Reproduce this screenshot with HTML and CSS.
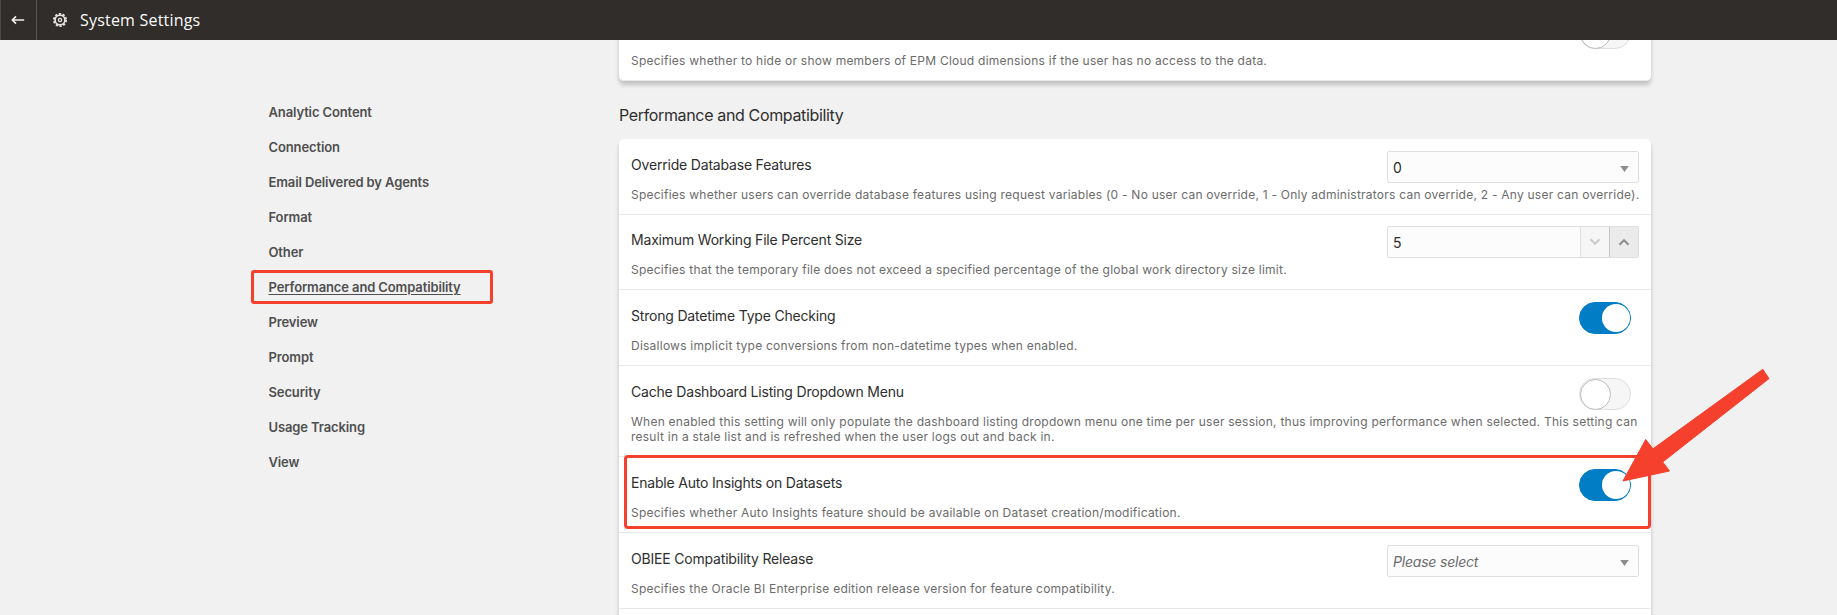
FILE: index.html
```html
<!DOCTYPE html>
<html lang="en">
<head>
<meta charset="utf-8">
<title>System Settings</title>
<link rel="stylesheet" href="styles.css">
</head>
<body>
<header class="topbar">
  <button class="back" aria-label="Back">
    <svg width="14" height="10" viewBox="0 0 14 10"><path d="M1.6 5H13.2M5 1.4 1.4 5 5 8.6" fill="none" stroke="#efeeed" stroke-width="1.7"/></svg>
  </button>
  <svg class="gear" width="16" height="16" viewBox="0 0 16 16">
    <circle cx="8" cy="8" r="6.1" fill="none" stroke="#e4e3e2" stroke-width="1.9" stroke-dasharray="2.2 1.63"/>
    <circle cx="8" cy="8" r="4.9" fill="none" stroke="#e4e3e2" stroke-width="1.7"/>
    <circle cx="8" cy="8" r="1.6" fill="none" stroke="#e4e3e2" stroke-width="1.3"/>
  </svg>
  <h1 class="page-title">System Settings</h1>
</header>
<div class="layout">
  <nav class="sidebar">
    <a class="nav-item">Analytic Content</a>
    <a class="nav-item">Connection</a>
    <a class="nav-item">Email Delivered by Agents</a>
    <a class="nav-item">Format</a>
    <a class="nav-item">Other</a>
    <a class="nav-item active">Performance and Compatibility</a>
    <a class="nav-item">Preview</a>
    <a class="nav-item">Prompt</a>
    <a class="nav-item">Security</a>
    <a class="nav-item">Usage Tracking</a>
    <a class="nav-item">View</a>
  </nav>
  <main class="content">
    <section class="card card-previous">
      <div class="row">
        <div class="row-head"><span class="label"></span><span class="toggle"><i class="knob"></i></span></div>
        <p class="desc">Specifies whether to hide or show members of EPM Cloud dimensions if the user has no access to the data.</p>
      </div>
    </section>
    <h2 class="section-title">Performance and Compatibility</h2>
    <section class="card">
      <div class="row">
        <div class="row-head"><span class="label">Override Database Features</span>
          <div class="field"><span class="value">0</span><svg class="caret" width="9" height="6" viewBox="0 0 9 6"><path d="M.2 0h8.6L4.5 6z" fill="#8b8d8f"/></svg></div>
        </div>
        <p class="desc">Specifies whether users can override database features using request variables (0 - No user can override, 1 - Only administrators can override, 2 - Any user can override).</p>
      </div>
      <div class="row compact">
        <div class="row-head"><span class="label">Maximum Working File Percent Size</span>
          <div class="field stepper"><span class="value">5</span>
            <span class="step down"><svg width="12" height="8" viewBox="0 0 12 8"><path d="M1.5 1.2 6 5.8l4.5-4.6" fill="none" stroke="#cbcbcb" stroke-width="2"/></svg></span>
            <span class="step up"><svg width="12" height="8" viewBox="0 0 12 8"><path d="M1.5 6.8 6 2.2l4.5 4.6" fill="none" stroke="#8e8e8e" stroke-width="2"/></svg></span>
          </div>
        </div>
        <p class="desc">Specifies that the temporary file does not exceed a specified percentage of the global work directory size limit.</p>
      </div>
      <div class="row">
        <div class="row-head"><span class="label">Strong Datetime Type Checking</span><span class="toggle on"><i class="knob"></i></span></div>
        <p class="desc">Disallows implicit type conversions from non-datetime types when enabled.</p>
      </div>
      <div class="row">
        <div class="row-head"><span class="label">Cache Dashboard Listing Dropdown Menu</span><span class="toggle"><i class="knob"></i></span></div>
        <p class="desc">When enabled this setting will only populate the dashboard listing dropdown menu one time per user session, thus improving performance when selected. This setting can<br>result in a stale list and is refreshed when the user logs out and back in.</p>
      </div>
      <div class="row highlighted">
        <div class="row-head"><span class="label">Enable Auto Insights on Datasets</span><span class="toggle on"><i class="knob"></i></span></div>
        <p class="desc">Specifies whether Auto Insights feature should be available on Dataset creation/modification.</p>
        <svg class="arrow" width="150" height="116" viewBox="0 0 150 116"><path d="M3 114 25.7 72.5 33 81.8 142.8 2.3 149 11.6 42.7 95 49.5 104z" fill="#f4402c" stroke="#f4402c" stroke-linejoin="round"/></svg>
      </div>
      <div class="row">
        <div class="row-head"><span class="label">OBIEE Compatibility Release</span>
          <div class="field"><span class="value placeholder">Please select</span><svg class="caret" width="9" height="6" viewBox="0 0 9 6"><path d="M.2 0h8.6L4.5 6z" fill="#8b8d8f"/></svg></div>
        </div>
        <p class="desc">Specifies the Oracle BI Enterprise edition release version for feature compatibility.</p>
      </div>
      <div class="row"></div>
    </section>
  </main>
</div>
</body>
</html>
```
FILE: styles.css
```css
*, *::after { box-sizing: border-box; }
body {
  margin: 0;
  height: 615px;
  overflow: hidden;
  display: flex;
  flex-direction: column;
  background: #f1f1f1;
  color: #2e2e2e;
  font-family: Inter, "Liberation Sans", sans-serif;
}
.topbar {
  flex: none;
  height: 40px;
  display: flex;
  align-items: center;
  background: #312d2a;
  border-left: 1px solid #4d4946;
  position: relative;
  z-index: 2;
}
.back {
  width: 36px;
  height: 40px;
  padding: 0 0 0 10px;
  display: flex;
  align-items: center;
  background: none;
  border: 0;
  border-right: 1px solid #5c5855;
}
.gear { margin-left: 15px; }
.page-title {
  margin: 0 0 0 12px;
  color: #fbfbfb;
  font: 400 16px/40px "Open Sans", sans-serif;
  letter-spacing: 0.2px;
}
.layout { display: flex; flex: 1; min-height: 0; }
.sidebar {
  flex: none;
  width: 619px;
  padding: 55px 0 0 251px;
  display: flex;
  flex-direction: column;
  align-items: flex-start;
}
.nav-item {
  height: 35px;
  padding-left: 17.5px;
  font-size: 13px;
  font-weight: 600;
  line-height: 35px;
  letter-spacing: -0.12px;
  color: #4f4f4f;
}
.nav-item.active {
  width: 242px;
  height: 34px;
  margin-bottom: 1px;
  padding-left: 14.5px;
  border: 3px solid #f4402c;
  border-radius: 3px;
  line-height: 28px;
  text-decoration: underline;
  text-underline-offset: 2px;
  text-decoration-thickness: 1px;
}
.content { width: 1032px; }
.card {
  background: #fff;
  border-radius: 5px;
  box-shadow: 0 4px 4px rgba(0, 0, 0, 0.2);
}
.card-previous { margin-top: -35px; }
.card-previous .row { border-radius: 5px; }
.section-title {
  height: 58px;
  margin: 0;
  padding-top: 5px;
  font-size: 16px;
  font-weight: 400;
  line-height: 58px;
  letter-spacing: -0.35px;
}
.row {
  position: relative;
  padding: 12px;
  border-bottom: 1px solid #e9e9e9;
}
.row.compact { padding-top: 11px; }
.row-head {
  height: 36px;
  display: flex;
  justify-content: space-between;
  align-items: flex-start;
}
.label { font-size: 14px; line-height: 28px; letter-spacing: -0.19px; }
.desc {
  margin: 0;
  font-size: 12px;
  line-height: 15px;
  letter-spacing: 0.24px;
  color: #6b6b6b;
  white-space: nowrap;
}
.field {
  width: 252px;
  height: 32px;
  display: flex;
  align-items: center;
  background: #fcfcfc;
  border: 1px solid #dfdfdf;
  border-radius: 2px;
}
.value { flex: 1; padding-left: 5px; font-size: 14px; }
.placeholder { font-style: italic; color: #6b6b6b; letter-spacing: -0.2px; }
.caret { margin: 3px 9px 0 0; }
.step {
  height: 30px;
  width: 29px;
  display: flex;
  align-items: center;
  justify-content: center;
  background: #f6f6f6;
  border-left: 1px solid #dfdfdf;
}
.step.up { background: #ebebeb; border-left-color: #c6c6c6; }
.toggle {
  width: 52px;
  height: 32px;
  margin-right: 8px;
  display: flex;
  align-items: center;
  background: #f6f6f6;
  border: 1px solid #dfdfdf;
  border-radius: 16px;
}
.knob {
  width: 31px;
  height: 31px;
  background: #fff;
  border: 1px solid #bdbdbd;
  border-radius: 50%;
}
.toggle.on { justify-content: flex-end; background: #007dc5; border-color: #007dc5; }
.toggle.on .knob { width: 28.5px; height: 28.5px; border: 0; }
.row.highlighted::after {
  content: "";
  position: absolute;
  top: -2px;
  left: 5px;
  right: 0;
  height: 74px;
  border: 3px solid #f4402c;
  border-radius: 4px;
}
.arrow { position: absolute; left: 1001px; top: -90px; z-index: 1; }
```
